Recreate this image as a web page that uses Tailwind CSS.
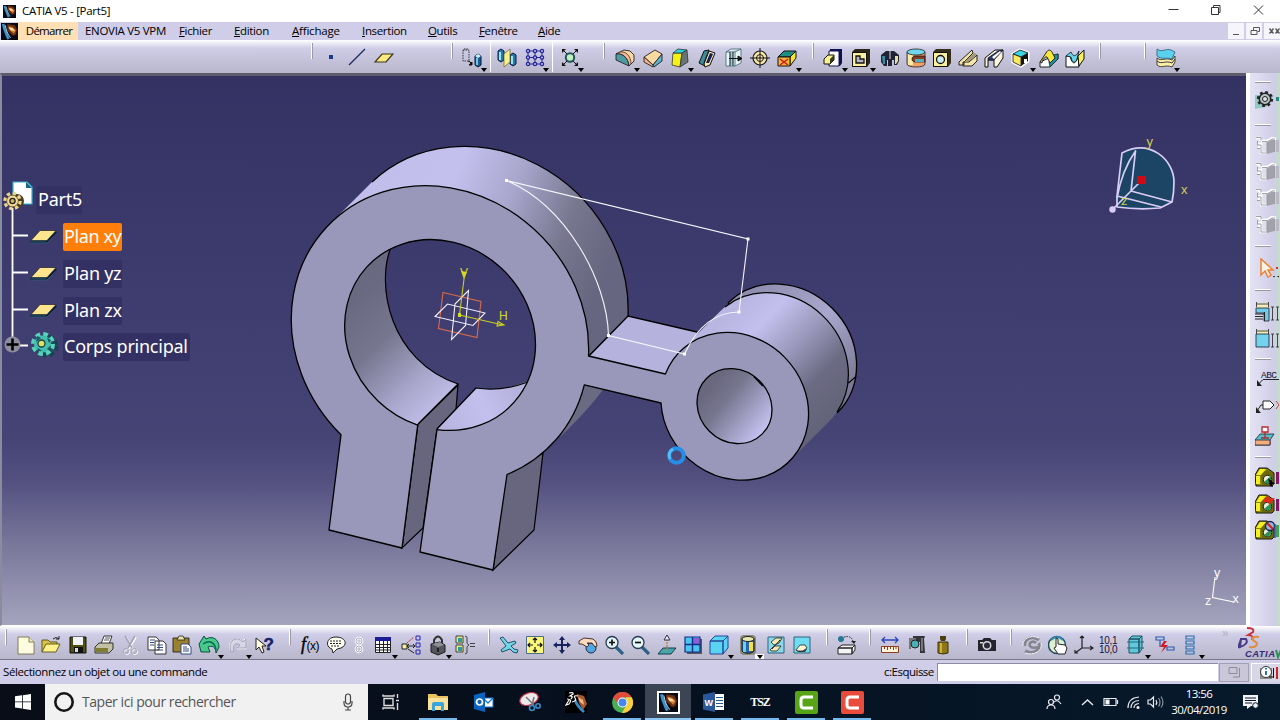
<!DOCTYPE html>
<html lang="fr">
<head>
  <meta charset="UTF-8" />
  <meta name="viewport" content="width=device-width, initial-scale=1.0" />
  <title>CATIA V5 - [Part5]</title>
  <script src="https://cdn.jsdelivr.net/npm/@tailwindcss/browser@4"></script>
</head>
<body class="w-[1280px] h-[720px] overflow-hidden flex flex-col bg-[#cfcde7] text-black font-['Open_Sans','Noto_Sans',sans-serif]">
  <!-- Shared symbols -->
  <svg class="hidden">
    <symbol id="app" viewBox="0 0 16 16">
      <path fill="#080a12" d="M0 0h16v16H0z" />
      <path fill="#6b2f12" d="M6 1l7 1 2 4-1 5-3 1-5-5z" />
      <path fill="#d9802f" d="M7 3l4 1 3 3-2 3-3-3z" />
      <path fill="#ffe2ad" d="M7 4l4 1 2 2-4 0z" />
      <path fill="none" stroke="#3b93cf" stroke-width="2.400" d="M2 1c1 6 3 9 5 14" />
      <path fill="none" stroke="#c7e6f5" stroke-width=".8" d="M4 2c1 5 2 8 5 12" />
    </symbol>
    <symbol id="caret" viewBox="0 0 6 4"><path d="M0 0h6L3 4z" /></symbol>
    <symbol id="plane" viewBox="0 0 28 14">
      <path fill="#2c6f7a" d="M0 12l1 2h16l10-11-1-1z" /><path fill="#0c1030" d="M0 12h16L26 2l1 1-10 10H0z" /><path fill="#ffe48e" stroke="#17202c" stroke-width=".7" d="M10 1h16l-9 10H1z" />
    </symbol>
    <symbol id="greyPart" viewBox="0 0 24 20">
      <path fill="#a2a2ac" d="M12 6l7-3v13l-7 2z" /><path fill="#b9b9c4" d="M21 4h3v12h-3z" /><path fill="#dfdfe9" d="M6 6h6v11H6z" /><path fill="none" stroke="#fff" stroke-width="2.400" d="M1 2h4v3M2 8h4v9h6M3 11h3M6 5h6l5-3 4 1" /><path fill="none" stroke="#96969f" stroke-width=".9" d="M1 1.500h5v3M2.500 5v4M2 9h4v8h6M2 12.500h3M7 5.500h5v11M12 6l5-3h3M19.500 4v12" />
    </symbol>
    <symbol id="olivePart" viewBox="0 0 20 20">
      <path fill="#87850c" stroke="#111" d="M0 8l4-7h8l7 5v11l-2 2H1z" /><path fill="#f5ee21" d="M1 8l4-6 6 0-5 6zM1 9h4v8H1z" /><path fill="#52500a" d="M6 8l6-5 7 4v11H7z" opacity=".55" /><circle cx="12.500" cy="12.500" r="4.200" fill="#e9ecda" stroke="#222" /><path fill="#2d9152" d="M9 15l7-6v5l-3 3z" />
    </symbol>
  </svg>

  <!-- Title bar -->
  <header class="h-[22px] shrink-0 bg-white flex items-center">
    <svg class="w-[13px] h-[13px] ml-[3px]"><use href="#app" /></svg>
    <span class="ml-1.5 w-[200px] text-[11.5px] leading-none tracking-[-0.3px]">CATIA V5 - [Part5]</span>
    <svg class="ml-auto mr-[13px] w-[100px] h-[14px]" viewBox="0 0 100 14" fill="none" stroke="#333">
      <path d="M1.500 5.500h10M44.500 3.500h7v7h-7zM46.500 3.500v-2h6.500v7h-2M87 1.500l9 9M96 1.500l-9 9" />
    </svg>
  </header>

  <!-- Menu bar -->
  <nav class="h-[18px] shrink-0 bg-[#cfcde7] flex items-center text-[11.5px] leading-none tracking-[-0.35px]">
    <svg class="w-[17px] h-[17px] ml-[1px]"><use href="#app" /></svg>
    <span class="w-[60px] h-[18px] flex items-center justify-center pl-0.5 tracking-[-0.75px] bg-[#ffdfb4]">Démarrer</span>
    <span class="w-[94px] pl-[7px] whitespace-nowrap tracking-[-0.3px]">ENOVIA V5 VPM</span>
    <span class="w-[55px] ml-[7px]"><u>F</u>ichier</span>
    <span class="w-[58px]"><u>E</u>dition</span>
    <span class="w-[70px] tracking-[-0.2px]"><u>A</u>ffichage</span>
    <span class="w-[66px]"><u>I</u>nsertion</span>
    <span class="w-[51px]"><u>O</u>utils</span>
    <span class="w-[59px]"><u>F</u>enêtre</span>
    <span><u>A</u>ide</span>
    <svg class="ml-auto w-[52px] h-[18px]" viewBox="0 0 52 18" fill="none">
      <path fill="#f6f5fb" d="M0 1h16v16H0zM18 1h16v16H18zM36 1h16v16H36z" />
      <path stroke="#555" d="M5 12.500h6M23 8.500h6v4h-6zM25.500 8V5.500h6v4h-2" /><path stroke="#555" stroke-width="1.400" d="M41.500 6.500l4 5M45.500 6.500l-4 5M47.500 6.500l4 5M51.500 6.500l-4 5" />
    </svg>
  </nav>

  <!-- Top toolbar -->
  <div class="h-[33px] shrink-0 flex items-center bg-linear-to-b from-white via-[#cfcde7] via-25% to-[#b9b7cb]">
    <i class="ml-[311px] mb-3 w-0.5 h-4 bg-white border-r border-[#99a]"></i>
    <svg class="ml-2 size-5 mt-0.5" viewBox="0 0 20 20"><path fill="#1a3c8e" d="M8 7h4v4H8z" /></svg>
    <svg class="ml-1.5 size-5 mt-0.5" viewBox="0 0 20 20"><path stroke="#1a2a5e" stroke-width="1.300" d="M2 17L18 1" /></svg>
    <svg class="ml-[7px] size-5 mt-0.5" viewBox="0 0 20 20"><path fill="#fbe983" stroke="#3a3414" stroke-width="1.200" d="M8 6h11l-7 8H1z" /></svg>
    <i class="ml-[57px] mb-3 w-0.5 h-4 bg-white border-r border-[#99a]"></i>
    <svg class="ml-[9px] size-5 mt-0.5 overflow-visible" viewBox="0 0 20 20">
      <path fill="none" stroke="#333" stroke-dasharray="1.500 1" d="M1 2h6v11H1zM2 1h4M6 13l4 4" /><path stroke="#111" fill="#111" d="M7 13l3 3M10 14v3H7z" /><path fill="#1c5a8e" stroke="#0b1838" d="M13 8l3-2 3 2v9l-3 2-3-2z" /><path fill="#c8f0fa" d="M13 8l3-2 3 2-3 2z" /><path fill="#6ec8e8" d="M14 10h2v7h-2z" />
      <use href="#caret" x="19" y="20" width="6" height="4" />
    </svg>
    <i class="ml-2 w-px h-[31px] bg-white"></i>
    <svg class="ml-1.5 size-5 mt-0.5" viewBox="0 0 20 20">
      <path fill="#247aa8" stroke="#0b1838" d="M1 3l3-2 3 2v9l-3 2-3-2zM13 7l3-2 3 2v9l-3 2-3-2z" /><path fill="#9ee2f2" d="M2 4h2v8H2zM14 8h2v8h-2z" /><path fill="#f8ef8e" stroke="#66621d" stroke-width=".7" d="M7 6l6-5v13l-6 5z" />
    </svg>
    <svg class="ml-2 size-5 mt-0.5 overflow-visible" viewBox="0 0 20 20">
      <g fill="none" stroke="#23239a"><path d="M3 3h14M3 9.500h14M3 16h14M3 3v13M10 3v13M17 3v13" /><g fill="#cfcde7" stroke-width="1.300"><circle cx="3" cy="3" r="1.600" /><circle cx="10" cy="3" r="1.600" /><circle cx="17" cy="3" r="1.600" /><circle cx="3" cy="9.500" r="1.600" /><circle cx="10" cy="9.500" r="1.600" /><circle cx="17" cy="9.500" r="1.600" /><circle cx="3" cy="16" r="1.600" /><circle cx="10" cy="16" r="1.600" /><circle cx="17" cy="16" r="1.600" /></g></g>
      <use href="#caret" x="18" y="20" width="6" height="4" />
    </svg>
    <i class="ml-[7px] w-px h-[31px] bg-white"></i>
    <svg class="ml-[7px] size-5 mt-0.5 overflow-visible" viewBox="0 0 20 20">
      <circle cx="10" cy="9.500" r="4.200" fill="#c4f0bd" stroke="#20545c" stroke-width="2" /><path fill="none" stroke="#111" d="M3 2l4 4M17 2l-4 4M3 17l4-4M17 17l-4-4" /><path fill="#111" d="M2 1h4L2 5zM18 1h-4l4 4zM2 18h4l-4-4zM18 18h-4l4-4z" />
      <use href="#caret" x="18" y="20" width="6" height="4" />
    </svg>
    <i class="ml-[23px] mb-3 w-0.5 h-4 bg-white border-r border-[#99a]"></i>
    <svg class="ml-2.5 size-5 mt-0.5 overflow-visible" viewBox="0 0 20 20">
      <path fill="#f9d9a2" stroke="#222" stroke-width=".9" d="M1 6l8-4 6 1 4 4v6l-5 5-1-5z" /><path fill="#f3b593" stroke="#222" stroke-width=".7" d="M1 6c7-1 12 4 13 12l2-2C16 8 11 3 5 4z" /><path fill="#4f9ba4" stroke="#222" stroke-width=".9" d="M1 6c7-1 12 4 13 12L1 12z" /><use href="#caret" x="19" y="20" width="6" height="4" />
    </svg>
    <svg class="ml-2 size-5 mt-0.5" viewBox="0 0 20 20"><path fill="#f9d9a2" stroke="#222" stroke-width=".9" d="M1 9l11-7 7 4-9 11z" /><path fill="#5db4cf" stroke="#222" stroke-width=".9" d="M10 17l9-11v7l-8 6z" /><path fill="#f4b38c" stroke="#222" stroke-width=".9" d="M1 9l9 8v2l-9-5z" /></svg>
    <svg class="ml-[7px] size-5 mt-0.5 overflow-visible" viewBox="0 0 20 20">
      <path fill="#f6f313" stroke="#333" stroke-width=".8" d="M3 5h9l-2 14-8-2z" /><path fill="#2ed0dc" stroke="#333" stroke-width=".8" d="M3 5l5-4 9 1-5 3z" /><path fill="#697474" stroke="#333" stroke-width=".8" d="M12 5l5-3 1 12-8 5z" /><use href="#caret" x="18" y="20" width="6" height="4" />
    </svg>
    <svg class="ml-[7px] size-5 mt-0.5" viewBox="0 0 20 20"><path fill="#3b8d9a" stroke="#111" d="M2 15L7 3l5-1-5 13 1 3z" /><path fill="#f3e8ae" stroke="#111" d="M7 16l5-13 6 2-5 12-5 2z" /><path fill="#15205a" d="M9 15l4-10 3 1-4 9z" /></svg>
    <svg class="ml-[7px] size-5 mt-0.5" viewBox="0 0 20 20"><path fill="#e7f5f7" stroke="#3c626c" stroke-width=".8" d="M2 4h9v14H2zM11 4l6-3v14l-6 3M2 4l5-3h10" /><path fill="#9dd0dc" d="M6 4h3v14H6z" /><path stroke="#111" fill="#111" d="M5 10.500h12M14 8l4 2.500-4 2.500zM6 4v14M9 4v14" /></svg>
    <svg class="ml-1.5 size-5 mt-0.5" viewBox="0 0 20 20"><circle cx="10" cy="10" r="7" fill="#f9e9a8" stroke="#1b1b1b" stroke-width="1.200" /><circle cx="10" cy="10" r="3.500" fill="none" stroke="#222" /><path stroke="#111" d="M10 0v20M0 10h20" /></svg>
    <svg class="ml-[7px] size-5 mt-0.5 overflow-visible" viewBox="0 0 20 20">
      <path fill="#1f8e82" stroke="#111" d="M1 9l6-6h12l-6 6z" /><path fill="#f5e430" stroke="#111" d="M13 9l6-6v7l-6 8z" /><path fill="#f6b63c" stroke="#111" d="M1 9h12v9H1z" /><path stroke="#d01818" stroke-width="1.500" d="M3 11l8 6M11 11l-8 6" /><use href="#caret" x="19" y="20" width="6" height="4" />
    </svg>
    <i class="ml-[15px] mb-3 w-0.5 h-4 bg-white border-r border-[#99a]"></i>
    <svg class="ml-[9px] size-5 mt-0.5 overflow-visible" viewBox="0 0 20 20">
      <path fill="#101050" d="M7 1h12v14l-2 3H7z" /><path fill="#fff" stroke="#101050" d="M6 3h10v15H6z" /><path fill="#f7f28c" stroke="#111" d="M1 11l4-4h6v5l-4 4H1z" /><path fill="#3a3a20" d="M7 11l4-4v5l-4 4z" /><use href="#caret" x="19" y="20" width="6" height="4" />
    </svg>
    <svg class="ml-2 size-5 mt-0.5 overflow-visible" viewBox="0 0 20 20">
      <path fill="#2a2618" d="M1 4l3-3h15v14l-3 4H1z" /><path fill="#f9ef9c" stroke="#111" d="M1.500 4.500h14v14h-14z" /><path fill="#b7b4c8" stroke="#111" stroke-width="1.300" d="M5 8h4v3h4v4H5z" /><use href="#caret" x="19" y="20" width="6" height="4" />
    </svg>
    <svg class="ml-[9px] size-5 mt-0.5" viewBox="0 0 20 20"><path fill="#222236" d="M1 7l5-4h8l5 4v6l-2 4h-3v-5h-2v6H8v-6H7v6H4l-3-4z" /><path fill="#3a8ea0" d="M2 8h3v8H3z" /><path fill="#e5df9c" d="M15 8h3v5l-2 3h-1z" /><path stroke="#ddd" d="M10 1v10" /></svg>
    <svg class="ml-1.5 size-5 mt-0.5" viewBox="0 0 20 20"><path fill="#f0a06a" stroke="#222" stroke-width=".8" d="M1 4v12c0 4 18 4 18 0V4z" /><path fill="#fbe9a6" d="M2 6v11h5V7z" /><path fill="#863a24" stroke="#111" stroke-width=".7" d="M19 8H9c-4 0-4 6 0 6h10z" /><path fill="#55aebb" d="M9 11h9v3H9z" /><ellipse cx="10" cy="4" rx="9" ry="3" fill="#6fd6ee" stroke="#222" stroke-width=".8" /></svg>
    <svg class="ml-1.5 size-5 mt-0.5" viewBox="0 0 20 20"><path fill="#35301c" d="M1 4l3-3h15v14l-3 4H1z" /><path fill="#f9ef9c" stroke="#111" d="M1.500 4.500h14v14h-14z" /><circle cx="8.500" cy="11.500" r="4" fill="#cdeaf2" stroke="#111" stroke-width="1.300" /></svg>
    <svg class="ml-1.5 size-5 mt-0.5" viewBox="0 0 20 20"><path fill="#f5e5a4" stroke="#222" d="M1 14L14 2l1 3-9 9v3H1zM5 18h9l5-5V7l-8 7H5z" /><path fill="#a39a72" d="M6 14l10-9 3 1-9 8z" /></svg>
    <svg class="ml-1.5 size-5 mt-0.5" viewBox="0 0 20 20"><path fill="#f9f5df" stroke="#111" d="M1 10L11 2h8v8l-6 9h-3v-7H4v7H1z" /><path fill="#273678" stroke="#111" stroke-width=".8" d="M4 10L14 3l5-1-9 10H4z" /><path fill="#fff" d="M8 9l8-6 1 1-7 7z" /></svg>
    <svg class="ml-1.5 size-5 mt-0.5 overflow-visible" viewBox="0 0 20 20"><path fill="none" stroke="#fff" stroke-width="3" d="M3 6l7-4 8 3v8l-7 5-8-4z" /><path fill="#36d8e6" stroke="#111" stroke-width=".8" d="M3 6l7-4 8 3-7 4z" /><path fill="#f9e95d" stroke="#111" stroke-width=".8" d="M3 6l8 3v9l-8-4z" /><path fill="#141414" d="M11 9l7-4v8l-7 5z" /><path fill="#fff" d="M14 11h3v4h-3z" /><use href="#caret" x="20" y="20" width="6" height="4" /></svg>
    <svg class="ml-[9px] size-5 mt-0.5" viewBox="0 0 20 20"><path fill="#fff" stroke="#222" d="M1 14v5h10l8-8V6z" /><path fill="#1d939c" stroke="#222" stroke-width=".8" d="M14 7l5-1v5l-8 8-1-5z" /><path fill="#f6e83b" stroke="#222" d="M1 14L7 5c2-4 5-4 7 1l2 4-5 5-3-6c-2-1-5 3-5 6z" /></svg>
    <svg class="ml-1.5 size-5 mt-0.5" viewBox="0 0 20 20"><path fill="#fff" stroke="#111" d="M1 8h4c2 9 6 9 8 0l1 11H1z" /><path fill="#62d4e9" stroke="#111" stroke-width=".8" d="M1 8l5-4c2 5 5 5 8-1l-2 8c-2 5-5 4-6-2z" /><path fill="#f7ef55" stroke="#111" d="M13 8l6-6v9l-5 7z" /></svg>
    <i class="ml-[14px] mb-3 w-0.5 h-4 bg-white border-r border-[#99a]"></i>
    <i class="ml-[43px] mb-3 w-0.5 h-4 bg-white border-r border-[#99a]"></i>
    <svg class="ml-2.5 size-5 mt-0.5 overflow-visible" viewBox="0 0 20 20"><path fill="#fbf0a5" stroke="#333" stroke-width=".9" d="M1 10c5 4 8-1 15 2l3-4v6l-3 5c-7-3-10 2-15-2z" /><path fill="none" stroke="#333" d="M1 13c5 4 8-1 15 2l3-4" /><path fill="#5cd1ee" stroke="#285d78" stroke-width=".8" d="M1 8V1c5 4 9-1 14 1l4 2-3 7c-6-2-10 1-15-3z" /><use href="#caret" x="18" y="20" width="6" height="4" /></svg>
  </div>

  <!-- Work area -->
  <main class="h-[553px] shrink-0 flex">
    <div class="relative w-[1246px] h-[553px] border-t-[3px] border-t-[#5c5c6c] border-l-2 border-l-[#8b8ba0] border-b border-b-white">
      <svg class="block w-[1244px] h-[549px]" viewBox="2 76 1244 549" font-family="Liberation Sans, sans-serif">
        <defs>
          <linearGradient id="sky" x1="0" y1="0" x2="0" y2="1">
            <stop offset="0" stop-color="#343263" /><stop offset=".45" stop-color="#403e70" /><stop offset=".66" stop-color="#464475" /><stop offset=".74" stop-color="#545181" /><stop offset=".86" stop-color="#7b799b" /><stop offset="1" stop-color="#a5a4be" />
          </linearGradient>
          <linearGradient id="bigSide" gradientUnits="userSpaceOnUse" x1="340" y1="150" x2="610" y2="260">
            <stop offset="0" stop-color="#c0bdea" /><stop offset=".4" stop-color="#c3c0ee" /><stop offset=".6" stop-color="#a9a7cd" /><stop offset=".82" stop-color="#78778f" /><stop offset="1" stop-color="#666680" />
          </linearGradient>
          <linearGradient id="bore" gradientUnits="userSpaceOnUse" x1="355" y1="300" x2="450" y2="400">
            <stop offset="0" stop-color="#696981" /><stop offset=".35" stop-color="#77768f" /><stop offset=".75" stop-color="#aaa8cd" /><stop offset="1" stop-color="#c1beea" />
          </linearGradient>
          <linearGradient id="lip" gradientUnits="userSpaceOnUse" x1="440" y1="425" x2="525" y2="385">
            <stop offset="0" stop-color="#b7b4e0" /><stop offset=".5" stop-color="#c3c0ee" /><stop offset="1" stop-color="#b1aed8" />
          </linearGradient>
          <linearGradient id="smallSide" gradientUnits="userSpaceOnUse" x1="735" y1="310" x2="835" y2="410">
            <stop offset="0" stop-color="#b9b6e2" /><stop offset=".2" stop-color="#c3c0ee" /><stop offset=".5" stop-color="#9795b7" /><stop offset=".75" stop-color="#6c6b84" /><stop offset="1" stop-color="#636379" />
          </linearGradient>
          <linearGradient id="smallBore" gradientUnits="userSpaceOnUse" x1="712" y1="385" x2="765" y2="428">
            <stop offset="0" stop-color="#69687f" /><stop offset=".3" stop-color="#77768f" /><stop offset="1" stop-color="#c3c0ee" />
          </linearGradient>
          <linearGradient id="rim" gradientUnits="userSpaceOnUse" x1="740" y1="290" x2="850" y2="400">
            <stop offset="0" stop-color="#8c8bac" /><stop offset=".5" stop-color="#a9a7cd" /><stop offset="1" stop-color="#75748e" />
          </linearGradient>
        </defs>
        <path fill="url(#sky)" d="M2 76h1244v549H2z" />

        <!-- Clamp ring, side walls -->
        <path fill="url(#bigSide)" d="M332 222L372 182A156 141 45 0 1 628 317L589 356L560 300L430 200z" />
        <path fill="none" stroke="#000" stroke-width="1.300" d="M372 182A156 141 45 0 1 628 317L589 356" />
        <path fill="#6b6a83" d="M583 384L603 389.500Q590 408 560 437z" />
        <path fill="#67667e" stroke="#000" stroke-width="1.200" d="M506 474L543 453L534 530L493 570z" />
        <path fill="#67667e" stroke="#000" stroke-width="1.200" d="M418 424L458 385L456 409L437 429L423 528L402 548z" />
        <!-- Bore -->
        <path fill="url(#bore)" d="M390 249C376 285 389 360 458 384L418 424L350 425L310 330L390 240z" />
        <path fill="none" stroke="#000" stroke-width="1.200" d="M391 247C376 285 389 360 458 384L418 424" />
        <path fill="url(#lip)" d="M437 429L476 388Q501 392 527 381.500L545 400L480 450z" />
        <path fill="none" stroke="#000" stroke-width="1.200" d="M437 429L476 388Q501 392 528 382" />
        <!-- Arm top -->
        <path fill="#b5b2de" d="M589 356L628 316L697 332L690 352L665 374z" />
        <path fill="none" stroke="#000" stroke-width="1.300" d="M697 332L628 316L589 356" />
        <!-- Boss sides -->
        <path fill="url(#rim)" stroke="#000" stroke-width="1.300" d="M728.200 302.700A77.500 70 45 0 1 837.800 412.300L780 360z" />
        <path fill="url(#smallSide)" d="M680.200 351.200L720.200 311.200A77.500 70 45 0 1 829.800 420.800L789.800 460.800z" />
        <path fill="none" stroke="#000" stroke-width="1.200" d="M725 307A77.500 70 45 0 1 837 412M848.500 383L856 376.500" />
        <!-- Front face -->
        <path fill="#9a98ba" stroke="#000" stroke-width="1.300" stroke-linejoin="round" d="M341 434.700A156 141 45 1 1 588.500 356L665.400 374A77.500 70 45 1 1 661 403L584.300 384.800A156 141 45 0 1 507 474.500L493 570L420 552L437 429.600A100 90.600 45 1 0 417.700 425.100L402 548L329 530z" />
        <path fill="url(#smallBore)" stroke="#000" stroke-width="1.300" d="M706.700 378.300A39.300 35.500 45 0 1 762.300 433.900A39.300 35.500 45 0 1 706.700 378.300z" />
        <path stroke="#000" stroke-width="1.800" d="M754 376.500L763 386" />

        <!-- Sketch -->
        <path fill="none" stroke="#f5f5fb" stroke-width="1.100" d="M506.500 180.500L748 239L739 312Q704 312 684.500 354L608.500 335.500C607 280 566 206 506.500 180.500" />
        <path fill="#fff" d="M505 179h3v3h-3zM746.500 237.500h3v3h-3zM737.500 310.500h3v3h-3zM683 352.500h3v3h-3zM607 334h3v3h-3z" />

        <!-- Origin planes -->
        <g fill="none" stroke-width="1.100">
          <path stroke="#d66b4c" d="M443 292.500L481 301.500L477 337.500L438.500 328.500z" />
          <path stroke="#f0effa" d="M435 316.500L447.500 304L485 313L473 325.500zM468.500 290.500L465.500 325.500L451.500 339.500L455 304z" />
          <path stroke="#c9cd22" d="M459.500 315L464.500 275M459.500 315L503 325M498 321.500L504 325L497 326z" />
        </g>
        <path fill="#d8dc1e" d="M461 271l6 1-3 7zM458 313h3v4h-3z" />
        <g fill="#d2d52a" font-size="12"><text x="460" y="277">V</text><text x="499" y="320">H</text></g>

        <!-- Compass -->
        <g stroke="#d9cdf6" stroke-width="1.700" stroke-linejoin="round">
          <path fill="#1c4464" d="M1122 153C1150 138 1174 160 1174 182Q1174 193 1172 202L1160 208Q1138 210 1117 207V196z" />
          <path fill="none" d="M1117 198Q1122 170 1135.500 151L1131 191L1172 202M1117 196L1161 207M1112 210L1141 181" />
        </g>
        <circle cx="1112.500" cy="209.500" r="3.200" fill="#d9cdf6" />
        <path fill="#d00a14" d="M1137 176h9v8h-9z" />
        <g fill="#d2cf4c" font-size="13"><text x="1146.500" y="146">y</text><text x="1181" y="194">x</text><text x="1121" y="205">z</text></g>

        <!-- View axes -->
        <path fill="none" stroke="#fff" stroke-width="1.100" d="M1215 577L1212.500 597.500L1234 602" />
        <g fill="#fff" font-size="12.500"><text x="1214" y="577">y</text><text x="1232.500" y="603">x</text><text x="1205" y="605">z</text></g>

        <!-- Busy cursor -->
        <circle cx="676.500" cy="455.500" r="7.300" fill="none" stroke="#278ee8" stroke-width="4" />
        <path fill="none" stroke="#4fbff8" stroke-width="3" d="M670 459a7.300 7.300 0 0 1 3-10" />
      </svg>

      <!-- Specification tree -->
      <div class="absolute left-0 top-[105px] w-[200px] text-white text-[18px] leading-none tracking-[-0.25px] font-['Noto_Sans',sans-serif]">
        <svg class="absolute left-0 top-0 w-[60px] h-[182px] overflow-visible" viewBox="2 181 60 182">
          <path stroke="#fff" stroke-width="1.800" d="M12.500 208V340M12 235.500h16M12 272.500h16M12 309.500h16M18 345.500h10" />
          <path fill="#fff" stroke="#2fb1cf" stroke-width="1.200" d="M13 182h14l5 5v17H13z" /><path fill="#136a80" d="M26 182l6 6h-6z" />
          <circle cx="17" cy="201" r="7" fill="#4a3d22" /><circle cx="12.500" cy="201" r="7.500" fill="none" stroke="#eed58d" stroke-width="3.500" stroke-dasharray="3.300 2.590" /><circle cx="12.500" cy="201" r="5.800" fill="#f3dc95" stroke="#5b4a22" stroke-width=".6" /><circle cx="12.500" cy="201" r="2.600" fill="#cdb461" stroke="#222" stroke-width="1.300" />
          <use href="#plane" x="30" y="229.500" width="28" height="14" /><use href="#plane" x="30" y="266.500" width="28" height="14" /><use href="#plane" x="30" y="303.500" width="28" height="14" />
          <circle cx="12.500" cy="344.500" r="8" fill="#8d8d9c" /><path stroke="#000" stroke-width="2.600" d="M6.500 344.500h12M12.500 338.500v12" />
          <circle cx="47" cy="346" r="9" fill="none" stroke="#17434e" stroke-width="5" stroke-dasharray="4.250 3" /><circle cx="46.500" cy="345.500" r="9" fill="#1d4f5e" /><circle cx="43" cy="344" r="9.500" fill="none" stroke="#57d2bb" stroke-width="5" stroke-dasharray="4.460 3" /><circle cx="42.500" cy="344" r="8.500" fill="#44bfae" /><path fill="#1c5560" d="M37 336l4 2-5 4zM47 349l4-4-1 6zM38 348l4 3h-5zM47 338l4 2-2 3z" /><circle cx="41.500" cy="343.500" r="3.500" fill="#e1df62" stroke="#164149" stroke-width="1.300" />
        </svg>
        <div class="h-[37px] pl-[34px] flex items-center"><span class="h-7 w-[46px] flex items-center pl-[2px] pb-0.5 bg-[#333163] rounded-xs">Part5</span></div>
        <div class="h-[37px] pl-[61px] flex items-center"><span class="h-7 w-[59px] flex items-center pl-px pb-0.5 whitespace-nowrap bg-[#ff7f0a] rounded-xs tracking-[-0.4px]">Plan xy</span></div>
        <div class="h-[37px] pl-[61px] flex items-center"><span class="h-7 w-[59px] flex items-center pl-px pb-0.5 whitespace-nowrap bg-[#333163] rounded-xs">Plan yz</span></div>
        <div class="h-[37px] pl-[61px] flex items-center"><span class="h-7 w-[59px] flex items-center pl-px pb-0.5 whitespace-nowrap bg-[#333163] rounded-xs">Plan zx</span></div>
        <div class="h-[35px] pl-[61px] flex items-center"><span class="h-7 w-[127px] flex items-center pl-px pb-0.5 whitespace-nowrap bg-[#333163] rounded-xs">Corps principal</span></div>
      </div>
    </div>

    <!-- Right toolbar -->
    <aside class="w-[34px] h-[553px] pl-[5px] pt-[3px] flex flex-col border-l-4 border-white bg-linear-to-r from-[#e4e3f4] via-[#cfcde7] via-80% to-[#c2dec6] overflow-hidden">
      <i class="mt-[5px] w-4 h-0.5 shrink-0 bg-white border-b border-[#99a]"></i>
      <svg class="mt-1.5 w-6 h-5 shrink-0" viewBox="0 0 24 20"><path fill="#95c8c3" d="M0 6h19l-8 12-11 2z" /><circle cx="10" cy="10" r="7" fill="none" stroke="#222" stroke-width="2.200" stroke-dasharray="2.750 2.750" /><circle cx="10" cy="10" r="5.700" fill="#b6c0c4" stroke="#222" stroke-width="1.500" /><circle cx="10" cy="10" r="2.500" fill="#dfe4e6" stroke="#222" /><path fill="#2b8580" d="M21 8h3v4h-3z" /></svg>
      <i class="mt-[15px] w-4 h-0.5 shrink-0 bg-white border-b border-[#99a]"></i>
      <svg class="mt-2.5 w-6 h-5 shrink-0"><use href="#greyPart" /></svg>
      <svg class="mt-1.5 w-6 h-5 shrink-0"><use href="#greyPart" /></svg>
      <svg class="mt-1.5 w-6 h-5 shrink-0"><use href="#greyPart" /></svg>
      <svg class="mt-[7px] w-6 h-5 shrink-0"><use href="#greyPart" /></svg>
      <i class="mt-2.5 w-4 h-0.5 shrink-0 bg-white border-b border-[#99a]"></i>
      <svg class="mt-[11px] w-6 h-5 shrink-0" viewBox="0 0 24 20"><path fill="#fdf3e6" stroke="#ec8232" stroke-width="1.500" d="M6 1v16l4-4 3 6 3-2-3-5h5z" /><path d="M18 18h2l-1 1.500zM22 18h2v1.500z" /><path fill="#c33" d="M21 9h2v2h-2z" /></svg>
      <i class="mt-[11px] w-4 h-0.5 shrink-0 bg-white border-b border-[#99a]"></i>
      <svg class="mt-[11px] w-6 h-5 shrink-0" viewBox="0 0 24 20"><path fill="#f2ebc0" d="M2 1h11v5H2z" /><path fill="none" stroke="#222" stroke-width=".8" d="M1.500 0v5M13.500 0v5M2 2h11M16 5h3M16 18h3M17.500 5v13M21 5h3M21 18h3M22.500 5v13" /><path fill="#6fc9e8" stroke="#222" stroke-width=".8" d="M1 6h13v13H9v-8H1z" /><path stroke="#222" d="M0 12h9M0 14.500h8M0 17h8M9.500 10v9" /></svg>
      <svg class="mt-[7px] w-6 h-5 shrink-0" viewBox="0 0 24 20"><path fill="#f2ebc0" d="M2 1h11v4H2z" /><path fill="none" stroke="#222" stroke-width=".8" d="M1.500 0v5M13.500 0v5M2 2h11M16 5h3M16 18h3M17.500 5v13M21 5h3M21 18h3M22.500 5v13" /><path fill="#73d2ee" stroke="#24333a" stroke-width=".9" d="M1 5h13v13H1z" /></svg>
      <i class="mt-[9px] w-4 h-0.5 shrink-0 bg-white border-b border-[#99a]"></i>
      <svg class="mt-[7px] w-6 h-5 shrink-0" viewBox="0 0 24 20"><text x="6" y="11" font-family="Liberation Mono" font-size="9.500" textLength="16" fill="#14143c">ABC</text><path fill="none" stroke="#222" d="M24 12.500H8l-4 4" /><path fill="#222" d="M2 13v6h5z" /></svg>
      <svg class="mt-[9px] w-6 h-5 shrink-0" viewBox="0 0 24 20"><path fill="#fff" stroke="#222" d="M8 5h7l4 4-4 4H8z" /><path fill="none" stroke="#222" d="M8 9H6l-4 6" /><path fill="#222" d="M1 11v6h5z" /><path fill="none" stroke="#c44" d="M21 5l3 4-3 4" /></svg>
      <svg class="mt-2.5 w-6 h-5 shrink-0" viewBox="0 0 24 20"><path fill="#56bdcc" stroke="#222" stroke-width=".8" d="M0 14l5-6h14l-4 6v5H0z" /><path fill="#f2ad80" stroke="#222" stroke-width=".8" d="M0 14h15v5H0z" /><path fill="#fff" stroke="#b52a2a" stroke-width="1.300" d="M7 1h6v5H7zM10 6v6M6 12h8" /></svg>
      <i class="mt-2.5 w-4 h-0.5 shrink-0 bg-white border-b border-[#99a]"></i>
      <svg class="mt-[9px] w-6 h-5 shrink-0" viewBox="0 0 24 20"><use href="#olivePart" width="20" height="20" /><path d="M13 11l7 6-3 0 1 3-3-1z" /><path fill="#7c1c5c" d="M21 5h3v12h-3z" /></svg>
      <svg class="mt-[7px] w-6 h-5 shrink-0" viewBox="0 0 24 20"><use href="#olivePart" width="20" height="20" /><path fill="#e52a1c" d="M7 8l6-7 1 4 6-1-6 7-1-3z" /><path fill="#7c1c5c" d="M21 5h3v12h-3z" /></svg>
      <svg class="mt-1.5 w-6 h-5 shrink-0" viewBox="0 0 24 20"><use href="#olivePart" width="20" height="20" /><circle cx="15" cy="6" r="4.500" fill="#9bb5d8" stroke="#16204e" stroke-width="1.300" /><path stroke="#c22" stroke-width="2" d="M12 3l6 6" /><path stroke="#2b4aa0" stroke-width="1.500" d="M20 4v14" /><path fill="#4b9a5e" d="M21 5h3v12h-3z" /></svg>
    </aside>
  </main>

  <!-- Bottom toolbar -->
  <div class="h-[34px] shrink-0 flex items-center border-b border-[#77778a] bg-linear-to-b from-white via-[#cfcde7] via-25% to-[#b9b7cb]">
    <i class="ml-[5px] mb-3 w-0.5 h-4 bg-white border-r border-[#99a]"></i>
    <svg class="ml-[9px] size-5 mt-1" viewBox="0 0 20 20"><path fill="#fefce0" stroke="#777243" stroke-width=".9" d="M2 2h11l5 5v12H2z" /><path fill="#f0eec0" stroke="#777243" stroke-width=".9" d="M13 2v5h5" /></svg>
    <svg class="ml-[5px] size-5 mt-1" viewBox="0 0 20 20"><path fill="#d8c548" stroke="#584f12" stroke-width=".9" d="M1 17V5h6l2 2h7v3" /><path fill="#fdf28c" stroke="#584f12" stroke-width=".9" d="M1 17l4-8h14l-4 8z" /><path fill="none" stroke="#222" d="M12 4q3-3 6 0M18 1v3h-3" /></svg>
    <svg class="ml-[7px] size-5 mt-1" viewBox="0 0 20 20"><path fill="#4f4f14" stroke="#111" d="M2 2h16v16H2z" /><path fill="#f2f3f7" d="M5 2h10v8H5z" /><path fill="#111" d="M6 12h9v6H6z" /><path fill="#ddd" d="M7 13h3v4H7z" /></svg>
    <svg class="ml-1.5 size-5 mt-1" viewBox="0 0 20 20"><path fill="#fff" stroke="#222" stroke-width=".9" d="M7 9l3-8h8l-3 8z" /><path fill="#c3c1a4" stroke="#222" stroke-width=".9" d="M1 12l4-4h14v6l-4 4H1z" /><path fill="#7f7d33" d="M2 13h12v4H2z" /><path stroke="#555" d="M11 3h5M10 5h5" /></svg>
    <svg class="ml-1.5 size-5 mt-1" viewBox="0 0 20 20" fill="none"><g stroke="#fff" transform="translate(1 1)"><path d="M5 1l7 12M15 1L8 13" stroke-width="1.600" /><circle cx="6" cy="16" r="2.500" /><circle cx="14" cy="16" r="2.500" /></g><g stroke="#a5a4b4"><path d="M5 1l7 12M15 1L8 13" stroke-width="1.600" /><circle cx="6" cy="16" r="2.500" /><circle cx="14" cy="16" r="2.500" /></g></svg>
    <svg class="ml-[7px] size-5 mt-1" viewBox="0 0 20 20"><path fill="#fff" stroke="#222" stroke-width=".9" d="M1 2h8l3 3v10H1zM8 6h8l3 3v10H8z" /><path stroke="#34488a" d="M3 5h5M3 7.500h4M3 10h4M10 10h6M10 12.500h6M10 15h6" /></svg>
    <svg class="ml-[5px] size-5 mt-1" viewBox="0 0 20 20"><path fill="#99812d" stroke="#222" stroke-width=".9" d="M1 3h16v14H1z" /><path fill="#ece1a0" stroke="#222" stroke-width=".8" d="M5 5l2-4h4l2 4z" /><path fill="#fff" stroke="#34488a" d="M9 9h7l3 3v7H9z" /><path stroke="#34488a" d="M11 12h4M11 14h6M11 16h6" /></svg>
    <svg class="ml-[7px] size-5 mt-1 overflow-visible" viewBox="0 0 20 20"><path fill="#48c98a" stroke="#0a4f40" d="M0 9L5 1l2 3c7-4 13 1 13 8l-3 6c0-6-4-8-8-6l2 5H2z" /><path fill="none" stroke="#0a6a58" stroke-width="1.500" d="M4 9c7-5 12-1 13 6" /><use href="#caret" x="19" y="20" width="6" height="4" /></svg>
    <svg class="ml-[9px] size-5 mt-1 overflow-visible" viewBox="0 0 20 20"><path fill="none" stroke="#fff" stroke-width="2.600" d="M3 15C0 7 8 2 14 7M17 4v9H9" /><path fill="#d7d6e6" stroke="#a3a2b2" d="M18 4v9H9l3-3c-4-3-8 0-6 6l-3 1C-1 6 8 0 15 7z" /><use href="#caret" x="18" y="20" width="6" height="4" /></svg>
    <svg class="ml-[7px] size-5 mt-1 overflow-visible" viewBox="0 0 20 20"><path fill="#fffce0" stroke="#222" d="M1 3v12l3-3 3 6 2-1-2-6h4z" /><text x="8.500" y="15" font-family="Liberation Sans" font-weight="bold" font-size="17" stroke="#16246c" stroke-width=".5" fill="#16246c">?</text></svg>
    <i class="ml-[14px] mb-3 w-0.5 h-4 bg-white border-r border-[#99a]"></i>
    <svg class="ml-[9px] size-5 mt-1 overflow-visible" viewBox="0 0 20 20"><text x="1" y="14.500" font-family="Liberation Serif" font-style="italic" font-size="18" stroke="#000" stroke-width=".4">f</text><text x="6.500" y="15" font-family="Liberation Sans" font-size="12" textLength="13">(x)</text></svg>
    <svg class="ml-1.5 size-5 mt-1" viewBox="0 0 20 20"><path fill="#fffff2" stroke="#222" d="M6 14C-1 12 0 2 10 2s12 8 5 11l-4 1-4 4z" /><path stroke="#222" stroke-dasharray="2 1" d="M4 6h11M4 8.500h12M5 11h9" /></svg>
    <svg class="ml-[3px] size-5 mt-1" viewBox="0 0 20 20" fill="none"><g stroke="#fff" stroke-width="2.600"><circle cx="10" cy="6" r="3" /><circle cx="10" cy="14" r="3" /></g><g stroke="#acabb9"><circle cx="10" cy="6" r="3" /><circle cx="10" cy="14" r="3" /></g></svg>
    <svg class="ml-1 size-5 mt-1 overflow-visible" viewBox="0 0 20 20"><path fill="#fff" stroke="#222" d="M2.500 2.500h15v15h-15z" /><path fill="#1c1c94" d="M2 2h16v4H2z" /><path stroke="#222" d="M2 9.500h16M2 12.500h16M2 15h16M6.500 6v12M10.500 6v12M14.500 6v12" /><use href="#caret" x="19" y="20" width="6" height="4" /></svg>
    <svg class="ml-2 size-5 mt-1" viewBox="0 0 20 20" fill="none"><path fill="#f6f09a" stroke="#222" d="M1 9h5v5H1z" /><path stroke="#2525b0" d="M15 1h4v4h-4zM15 8h4v4h-4zM15 15h4v4h-4z" /><path stroke="#c22" stroke-dasharray="2 1" d="M6 8l7-6" /><path stroke="#222" d="M6 11h8M8 9l-2 2 2 2M12 9l2 2-2 2M7 14l6 4" /></svg>
    <svg class="ml-[7px] size-5 mt-1 overflow-visible" viewBox="0 0 20 20"><path fill="none" stroke="#333" stroke-width="2" d="M6 9V5q4-7 8 0v4" /><path fill="#55555e" stroke="#1a1a1a" d="M3 9l9-2 5 3v7l-7 3-7-3z" /><path fill="#8f8f98" d="M4 9l8-2 4 3-6 2z" /><path stroke="#111" stroke-width="1.600" d="M10 13v4" /><use href="#caret" x="18" y="20" width="6" height="4" /></svg>
    <svg class="ml-[7px] size-5 mt-1" viewBox="0 0 20 20" fill="none"><path fill="#e6e98a" stroke="#222" stroke-width=".8" d="M1 1h7v7H1zM1 10h7v7H1z" /><path fill="#2b9aa8" d="M3 3h4v4H3zM3 12h4v4H3z" /><path stroke="#444" d="M10 1q3 0 2 4t2 5q-3 1-2 5t-2 4M15 8.500h5M15 11.500h5" /></svg>
    <i class="ml-[13px] mb-3 w-0.5 h-4 bg-white border-r border-[#99a]"></i>
    <svg class="ml-[9px] size-5 mt-1" viewBox="0 0 20 20"><path fill="#6fd6e8" stroke="#1b3f5a" stroke-width=".9" d="M1 3l3-1 5 6 7-2 1 2-5 3 3 3 4 1-1 3-4-1-3-3-8 3-1-2 5-4z" /></svg>
    <svg class="ml-1.5 size-5 mt-1" viewBox="0 0 20 20" fill="none"><path fill="#fbf67c" stroke="#4e6b8a" d="M1.500 1.500h17v17h-17z" /><path stroke="#111" stroke-width="1.200" d="M10 8V3M8 5l2-2 2 2M10 12v5M8 15l2 2 2-2M8 10H3M5 8l-2 2 2 2M12 10h5M15 8l2 2-2 2" /></svg>
    <svg class="ml-[7px] size-5 mt-1" viewBox="0 0 20 20"><path fill="#16235e" d="M10 1l3 4h-2v4h4V7l4 3-4 3v-2h-4v4h2l-3 4-3-4h2v-4H5v2l-4-3 4-3v2h4V5H7z" /></svg>
    <svg class="ml-1.5 size-5 mt-1" viewBox="0 0 20 20"><circle cx="13" cy="13" r="5" fill="#4fa8e0" stroke="#224" /><path fill="#fad9bc" stroke="#322" stroke-width=".9" d="M1 6l5-3 9 1q4 2 4 7l-2 1-3-4H9l2 2-2 2-5-3H1z" /></svg>
    <svg class="ml-1.5 size-5 mt-1" viewBox="0 0 20 20"><path stroke="#2d6087" stroke-width="3.200" d="M12 12l7 7" /><circle cx="8" cy="7.500" r="6" fill="#e3f5f6" stroke="#253b50" stroke-width="1.300" /><path stroke="#111" stroke-width="1.700" d="M5 7.500h6M8 4.500v6" /></svg>
    <svg class="ml-1.5 size-5 mt-1" viewBox="0 0 20 20"><path stroke="#2d6087" stroke-width="3.200" d="M12 12l7 7" /><circle cx="8" cy="7.500" r="6" fill="#e3f5f6" stroke="#253b50" stroke-width="1.300" /><path stroke="#111" stroke-width="1.700" d="M5 7.500h6" /></svg>
    <svg class="ml-[7px] size-5 mt-1" viewBox="0 0 20 20"><path fill="#47a5ac" stroke="#163e48" d="M1 19l5-6h13l-5 6z" /><path stroke="#b6842c" stroke-width="1.300" stroke-dasharray="2 1" d="M10 15V4" /><path fill="#e9e7fa" stroke="#334" d="M7 5l3-5 3 5z" /></svg>
    <svg class="ml-1.5 size-5 mt-1" viewBox="0 0 20 20"><path fill="#57575f" d="M4 4h15v15H4z" /><path fill="#4bc5ee" stroke="#122d8a" stroke-width="1.200" d="M2 2h15v15H2z" /><path fill="#8a62d6" d="M10 3h6v6h-6z" /><path stroke="#122d8a" stroke-width="1.400" d="M9.500 2v15M2 9.500h15" /></svg>
    <svg class="ml-1.5 size-5 mt-1 overflow-visible" viewBox="0 0 20 20"><path fill="#59d5f2" stroke="#28449a" d="M1 6h13v13H1zM1 6l5-5h13l-5 5zM14 6l5-5v12l-5 6z" /><use href="#caret" x="19" y="20" width="6" height="4" /></svg>
    <svg class="ml-[9px] size-5 mt-1 overflow-visible" viewBox="0 0 20 20"><rect x="2" y="0" width="16" height="20" rx="4" fill="#8b8b76" /><path fill="#2c62b0" stroke="#111" stroke-width=".9" d="M4 4v12c2 3 10 3 12 0V4z" /><path fill="#63d7e2" d="M5 6h3v11H5z" /><path fill="#f2e63a" d="M11 7h4v9h-4z" /><ellipse cx="10" cy="4" rx="6" ry="2.500" fill="#e8e8b2" stroke="#222" /><path fill="#fff" d="M17 19h9v5H17z" /><use href="#caret" x="19" y="20" width="6" height="4" /></svg>
    <svg class="ml-2 size-5 mt-1" viewBox="0 0 20 20"><path fill="#86d8ea" stroke="#30637a" d="M2 2h16v16H2z" /><path fill="#f4e9b6" stroke="#222" stroke-width=".8" d="M5 7l5-4h6l-3 5-5 2zM4 15l4-4h7l-4 5H6z" /><path stroke="#222" d="M14 5L6 14" /></svg>
    <svg class="ml-1.5 size-5 mt-1" viewBox="0 0 20 20"><path fill="#6fdcf2" stroke="#30637a" d="M2 2h16v16H2z" /><path fill="#3b3b3b" d="M4 15l2 2h7l2-3z" /><path fill="#fbf6d2" stroke="#222" stroke-width=".8" d="M4 15l4-5h5l2 3-4 3H6z" /></svg>
    <i class="ml-[14px] mb-3 w-0.5 h-4 bg-white border-r border-[#99a]"></i>
    <svg class="ml-2 size-5 mt-1" viewBox="0 0 20 20" fill="none"><circle cx="5" cy="4" r="3" fill="#247a94" /><path stroke="#222" stroke-dasharray="1.500 1" d="M8 2q8-2 9 5" /><path fill="#222" d="M15 6h5l-2 3z" /><path fill="#f4f4f6" stroke="#222" d="M2 13l4-3h13l-3 3zM2 13h14v6H2zM16 13l3-3v5l-3 4z" /></svg>
    <i class="ml-[13px] mb-3 w-0.5 h-4 bg-white border-r border-[#99a]"></i>
    <svg class="ml-[9px] size-5 mt-1" viewBox="0 0 20 20" fill="none"><path stroke="#2a45b8" stroke-width="1.300" d="M2 5h16M5 2L2 5l3 3M15 2l3 3-3 3" /><path fill="#fff3d8" stroke="#913c22" d="M1.500 11.500h17v6h-17z" /><path stroke="#913c22" d="M4.500 11v3M7.500 11v4M10.500 11v3M13.500 11v4M16 11v3" /></svg>
    <svg class="ml-[7px] size-5 mt-1" viewBox="0 0 20 20"><path fill="#33333c" d="M6 1h12l-1 3 1 14h-5V7H6z" /><path fill="#777" d="M14 3h2v13h-2zM2 3h7v3H4v8H2z" /><circle cx="8" cy="9" r="4" fill="#4aafb6" stroke="#222" /></svg>
    <svg class="ml-1.5 size-5 mt-1" viewBox="0 0 20 20"><path fill="#4b3e0b" d="M7 1h6v3l-1 2H8L7 4z" /><path fill="#8e7718" stroke="#3b3008" d="M5 7h10v11q-5 2-10 0z" /><path fill="#d0b43a" d="M7 8h2v10H7z" /></svg>
    <i class="ml-[13px] mb-3 w-0.5 h-4 bg-white border-r border-[#99a]"></i>
    <svg class="ml-[9px] size-5 mt-1" viewBox="0 0 20 20"><path fill="#24242c" d="M1 5h4l2-2h6l2 2h4v11H1z" /><circle cx="10" cy="10.500" r="4.500" fill="#d7d7df" /><circle cx="10" cy="10.500" r="3" fill="#2b2b38" /><path fill="#ddd" d="M3 7h3v1.500H3z" /></svg>
    <i class="ml-[13px] mb-3 w-0.5 h-4 bg-white border-r border-[#99a]"></i>
    <svg class="ml-2.5 size-5 mt-1" viewBox="0 0 20 20" fill="none"><path stroke="#85858f" stroke-width="3.200" d="M17 5C10 0 1 4 3 11M3 16c8 4 17-1 14-8" /><path stroke="#f2f2f8" d="M17 3C8-1 0 4 1 11M3 18c9 3 18-2 16-10" /><path stroke="#85858f" stroke-width="2.600" d="M14 8c-3-3-8 0-6 3s5 2 8 1" /></svg>
    <svg class="ml-1.5 size-5 mt-1" viewBox="0 0 20 20"><circle cx="9" cy="10" r="8.500" fill="#dff0d0" stroke="#274b62" stroke-width="1.500" /><path fill="none" stroke="#2f8ab4" stroke-width="2" d="M3 5q6-6 12 0" /><path fill="#fff" stroke="#111" stroke-width=".9" d="M8 3l2 1v5l7 1 2 3-2 6h-7l-4-6 2-1z" /></svg>
    <svg class="ml-1.5 size-5 mt-1" viewBox="0 0 20 20" fill="none"><path stroke="#222" stroke-width="1.200" d="M8 1v12h11M8 13l-7 5M6 3l2-2 2 2M16 11l3 2-3 2M1 15v3h3" /></svg>
    <span class="ml-[5px] w-5 mt-1 text-[10px] leading-[9px] tracking-[-0.300px] text-[#14143c] font-['Liberation_Sans',sans-serif]">10,1<br />10,0</span>
    <svg class="ml-[7px] size-5 mt-1 overflow-visible" viewBox="0 0 20 20"><path fill="#62c9dc" stroke="#1c5060" d="M3 4h10v14H3zM3 4l3-3h10l-3 3zM13 4l3-3v13l-3 4z" /><path fill="none" stroke="#236b78" d="M1 7h17M1 13h17" /><use href="#caret" x="19" y="20" width="6" height="4" /></svg>
    <svg class="ml-[9px] size-5 mt-1" viewBox="0 0 20 20" fill="none"><path stroke="#2a5db0" stroke-width="1.200" d="M1 2h8v3H1zM5 5v7M12 12h7v3h-7z" /><path fill="#d31a24" d="M9 6l-4 6h4l-3 6 7-8H9l3-4z" /></svg>
    <svg class="ml-[5px] size-5 mt-1 overflow-visible" viewBox="0 0 20 20" fill="none"><path stroke="#2a6fb0" stroke-width="1.200" d="M6 1h8v3H6zM6 6h8v3H6zM6 11h8v3H6zM6 16h8v3H6z" /><g fill="#000"><use href="#caret" x="19" y="20" width="6" height="4" /></g></svg>
    <span class="ml-[22px] mb-5 w-[10px] text-[13px] leading-none text-[#b3b2c2]">»</span>
    <svg class="ml-[6px] w-[42px] h-[32px] shrink-0" viewBox="0 0 42 32" fill="none">
      <path stroke="#c92f3c" stroke-width="1.800" d="M9 1q8 0 6 4l-5 3q6 0 4 5" />
      <path stroke="#4a3a88" stroke-width="2" d="M3 12h5q3 5-6 8zl-3 9" />
      <path stroke="#e28c42" stroke-width="2" d="M21 10q-8-1-6 3l4 3q0 5-8 4" />
      <text x="7" y="30" font-family="Liberation Sans" font-weight="bold" font-style="italic" font-size="9.500" textLength="30" fill="#352b7c">CATIA</text>
      <path stroke="#2c9150" stroke-width="2" d="M38 23l2 7 3-7" />
    </svg>
  </div>

  <!-- Status bar -->
  <div class="h-6 shrink-0 flex items-center bg-[#cfcde7] text-[11.500px] leading-none tracking-[-0.400px]">
    <span class="pl-[3px] w-[881px] whitespace-nowrap">Sélectionnez un objet ou une commande</span>
    <span class="w-[52px] pl-[3px] whitespace-nowrap tracking-[-0.500px]">c:Esquisse</span>
    <div class="ml-[4px] w-[281px] h-[18px] bg-white border-t border-l border-[#8c8ca0]"></div>
    <div class="ml-px w-[30px] h-[19px] flex items-center justify-center bg-[#c9c7d8] border border-[#a2a1b4]">
      <svg class="w-3 h-3" viewBox="0 0 12 12" fill="none"><path stroke="#8d8c9d" d="M1 1.500h8v6H1zM11.500 2v9H5" /></svg>
    </div>
    <div class="ml-0.5 flex-1 h-[19px] flex items-center pl-1.5 bg-[#d8d7e6] border-l border-t border-white">
      <svg class="w-[22px] h-4" viewBox="0 0 22 16" fill="none"><path fill="#8d8d98" d="M2 3h12v11H2z" /><circle cx="8" cy="7" r="5.500" fill="#fff" stroke="#333" /><path stroke="#2673b8" stroke-width="2" d="M8 3v1.500M8 6v4" /><path stroke="#111" d="M11 12h4M15.500 3v10" /><path stroke="#c22" stroke-width="2" d="M19 2v12" /></svg>
    </div>
  </div>

  <!-- Taskbar -->
  <footer class="h-9 shrink-0 flex items-center bg-linear-to-r from-[#090d18] via-[#06101e] to-[#061a2c] text-white">
    <div class="w-[45px] flex justify-center">
      <svg class="size-4" viewBox="0 0 16 16" fill="#fff"><path d="M0 2.300l7-1v6.200H0zM7.800 1.200L16 0v7.500H7.800zM0 8.300h7v6.300l-7-1zM7.800 8.300H16V16l-8.200-1.200z" /></svg>
    </div>
    <div class="w-[323px] h-9 flex items-center bg-[#f1f1f1] text-[#555]">
      <svg class="ml-2 size-[22px]" viewBox="0 0 22 22"><circle cx="11" cy="11" r="8.700" fill="none" stroke="#151515" stroke-width="2.600" /></svg>
      <span class="ml-[7px] w-[250px] whitespace-nowrap text-[14px] leading-none tracking-[-0.450px]">Taper ici pour rechercher</span>
      <svg class="w-4 h-[18px] ml-2" viewBox="0 0 16 18" fill="none" stroke="#444" stroke-width="1.200"><rect x="5.500" y="1" width="5" height="10" rx="2.500" /><path d="M4 8v2q0 4 4 4t4-4V8M8 14v3M5 17h6" /></svg>
    </div>
    <div class="w-[47px] h-9 pr-0.5 flex items-center justify-center"><svg class="size-[18px]" viewBox="0 0 18 18" fill="none" stroke="#ddd" stroke-width="1.400"><path d="M2 5.500h9v7H2zM1 1.500v1.500h11V1.500M1 16.500V15h11v1.500M15.500 1v4M15.500 10v7M14 7.500h3" /></svg></div>
    <div class="w-[38px] mx-1 h-9 pt-0.5 flex items-center justify-center border-b-2 border-[#76b9ed]"><svg class="w-[22px] h-[18px]" viewBox="0 0 22 18"><path fill="#eac25c" d="M1 1h8l2 2h10v14H1z" /><path fill="#fbe099" d="M1 5h20v12H1z" /><path fill="#38a6dc" d="M5 11q0-2 2-2h8q2 0 2 2v7h-3v-5H8v5H5z" /></svg></div>
    <div class="w-[46px] h-9 flex items-center justify-center"><svg class="size-5" viewBox="0 0 20 20"><path fill="#fff" stroke="#1778cf" d="M9 6h10v9H9z" /><path fill="none" stroke="#1778cf" stroke-width="1.300" d="M9 6l5 5 5-5" /><path fill="#0a64bd" d="M0 3l11-3v20L0 17z" /><circle cx="5.500" cy="10" r="3" fill="none" stroke="#fff" stroke-width="1.700" /></svg></div>
    <div class="w-[46px] h-9 flex items-center justify-center"><svg class="size-[22px]" viewBox="0 0 22 22"><ellipse cx="10" cy="8" rx="9.500" ry="6" fill="#ece9ea" stroke="#c4304a" stroke-width="1.200" transform="rotate(-20 10 8)" /><path stroke="#777" stroke-width="1.500" d="M7 6l8 8M15 6l-2 9" /><circle cx="13" cy="17" r="2.500" fill="none" stroke="#3a8cc8" stroke-width="1.600" /><circle cx="19" cy="15" r="2.200" fill="none" stroke="#3a8cc8" stroke-width="1.600" /></svg></div>
    <div class="w-[46px] h-9 flex items-center justify-center"><svg class="size-[22px]" viewBox="0 0 22 22"><path fill="#000" d="M0 0h22v22H0z" /><path fill="#a35a30" d="M12 3l7 2 3 8-4 6-4-7z" /><path fill="#f3b582" d="M13 6l5 3 1 5-4-3z" /><path fill="none" stroke="#398ec8" stroke-width="2.600" d="M10 9q2 6 9 12" /><path fill="none" stroke="#fff" stroke-width="1.200" d="M4 2q5-1 4 1L5 5q4 0 1 3M2 8q6 0 2 5l-3 1 3-5M13 5q-5-1-3 2t-3 4" /></svg></div>
    <div class="w-[38px] mx-1 h-9 pt-0.5 flex items-center justify-center border-b-2 border-[#76b9ed]"><svg class="size-[21px]" viewBox="0 0 20 20"><circle cx="10" cy="10" r="10" fill="#4aae52" /><path fill="#e24a3b" d="M1.300 5a10 10 0 0 1 17.400 0H10L6 12z" /><path fill="#fbce3c" d="M18.700 5A10 10 0 0 1 9.500 20l5-9L13 5z" /><circle cx="10" cy="10" r="4.800" fill="#fff" /><circle cx="10" cy="10" r="3.800" fill="#4587ee" /></svg></div>
    <div class="w-[46px] h-9 pt-0.5 flex items-center justify-center bg-[#3b4554] border-b-2 border-[#8cc6f2]"><svg class="size-[23px] border-2 border-white"><use href="#app" /></svg></div>
    <div class="w-[38px] mx-1 h-9 pt-0.5 flex items-center justify-center border-b-2 border-[#76b9ed]"><svg class="w-[22px] h-5" viewBox="0 0 22 20"><path fill="#fff" d="M11 2h10v16H11z" /><path stroke="#2b579a" d="M13 5.500h7M13 8.500h7M13 11.500h7M13 14.500h7" /><path fill="#2b579a" d="M0 2.500L12 0v20L0 17.500z" /><text x="1.500" y="13.500" font-family="Liberation Sans" font-weight="bold" font-size="9" fill="#fff">W</text></svg></div>
    <div class="w-[38px] mx-1 h-9 pt-0.5 flex items-center justify-center border-b-2 border-[#76b9ed]"><span class="text-[12px] leading-none font-bold tracking-[-1px] font-['Liberation_Serif',serif]">TSZ</span></div>
    <div class="w-[38px] mx-1 h-9 pt-0.5 flex items-center justify-center border-b-2 border-[#76b9ed]"><svg class="size-[23px]" viewBox="0 0 23 23"><rect width="23" height="23" rx="2" fill="#57a517" /><path fill="none" stroke="#fff" stroke-width="3" d="M18 6h-9q-3 0-3 3v5q0 3 3 3h9" /></svg></div>
    <div class="w-[38px] mx-1 h-9 pt-0.5 flex items-center justify-center border-b-2 border-[#76b9ed]"><svg class="size-[23px]" viewBox="0 0 23 23"><rect width="23" height="23" rx="2" fill="#ea4c3c" /><path fill="none" stroke="#fff" stroke-width="3" d="M18 6h-9q-3 0-3 3v5q0 3 3 3h9" /></svg></div>
    <svg class="ml-[171px] w-[120px] h-[18px]" viewBox="1046 693 120 18" fill="none" stroke="#e6e9ee" stroke-width="1.200">
      <circle cx="1051" cy="702" r="2.500" /><circle cx="1057" cy="697.500" r="2.500" /><path d="M1047 709q0-4 4-4t4 4M1053 703q4-5 8 1" />
      <path d="M1082 705l5.500-5 5.500 5" stroke-width="1.400" />
      <path d="M1104 698.500h12v7h-12zM1117.500 700v4" /><path fill="#fff" d="M1106 700h3v4h-3z" />
      <path d="M1128 708q0-10 11-11M1131 708q0-7 8-7.500M1134 708q0-4 5-4.500" /><circle cx="1138" cy="707.500" r="1" fill="#fff" />
      <path d="M1148 700h2.500l3-3v10l-3-3H1148zM1156 700q1.500 2.500 0 5" /><path stroke="#8b93a0" d="M1158.500 698q3 4 0 8.500M1161 696.500q4 6 0 11" />
    </svg>
    <div class="ml-px w-[64px] pb-px text-center text-[11.500px] leading-4 tracking-[-0.550px] whitespace-nowrap">13:56<br />30/04/2019</div>
    <svg class="ml-[11px] size-[18px]" viewBox="0 0 18 18"><path fill="#f2f4f7" d="M1 2h15v11h-7l-4 3v-3H1z" /><path stroke="#0a1626" stroke-width="1.200" d="M3 5h11M3 7.500h11M3 10h7" /><circle cx="13.500" cy="12.500" r="2.800" fill="#e9ecf1" stroke="#0a1626" /></svg>
  </footer>
</body>
</html>
